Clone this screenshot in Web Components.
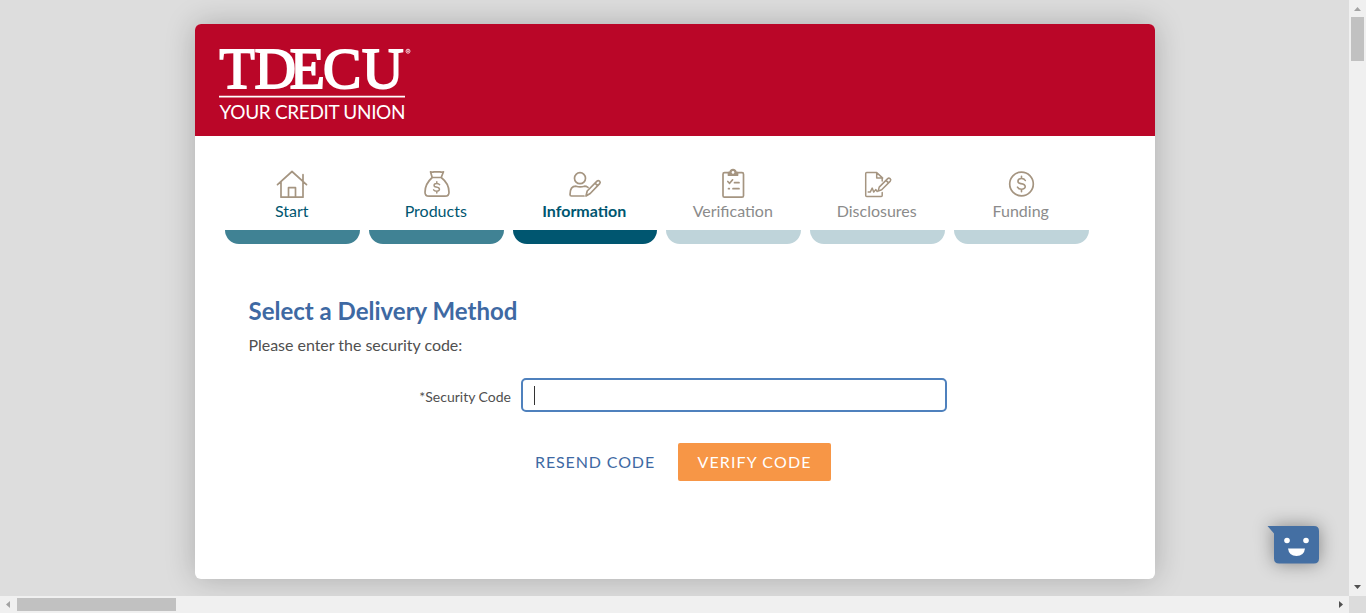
<!DOCTYPE html>
<html lang="en">
<head>
<meta charset="utf-8">
<title>TDECU</title>
<style>
html,body{margin:0;height:100%;overflow:hidden}
body{font-family:Lato,sans-serif;background:#ddd}
</style>
</head>
<body>
<app-window>
  <app-card>
    <brand-header slot="header"></brand-header>
    <step-bar>
      <step-item state="done" icon="home">Start</step-item>
      <step-item state="done" icon="bag">Products</step-item>
      <step-item state="active" icon="person">Information</step-item>
      <step-item icon="clipboard">Verification</step-item>
      <step-item icon="document">Disclosures</step-item>
      <step-item icon="coin">Funding</step-item>
    </step-bar>
    <code-form></code-form>
  </app-card>
  <chat-button slot="chat"></chat-button>
</app-window>
<script>
function define(name, html) {
  customElements.define(name, class extends HTMLElement {
    constructor() {
      super();
      const t = document.createElement('template');
      t.innerHTML = html;
      this.attachShadow({mode: 'open'}).append(t.content.cloneNode(true));
    }
  });
}

define('app-window', `<style>
:host{display:grid;grid-template:596px 17px / 1349px 17px;width:1366px;height:613px;position:relative}
.view{background:#ddd;overflow:hidden;padding:24px 0 0 195px}
.v,.h{background:#f0f0f0;display:flex;align-items:center}
.v{flex-direction:column}
.v svg,.h svg{flex:none;display:block}
.v i{width:13px;height:44px;background:#c1c1c1}
.h i{width:159px;height:13px;background:#c1c1c1}
.sp{flex:1}
.corner{background:#dcdcdc}
slot[name=chat]{display:block;position:absolute;left:1267px;top:525px}
</style>
<div class="view"><slot></slot></div>
<div class="v"><svg width="17" height="17"><path d="M5 11h7L8.500 7z" fill="#a3a3a3"/></svg><i></i><span class="sp"></span><svg width="17" height="17"><path d="M5 6h7L8.500 10z" fill="#505050"/></svg></div>
<div class="h"><svg width="17" height="17"><path d="M10 5v7L6 8.500z" fill="#a3a3a3"/></svg><i></i><span class="sp"></span><svg width="17" height="17"><path d="M7 5v7l4-3.500z" fill="#505050"/></svg></div>
<div class="corner"></div>
<slot name="chat"></slot>`);

define('app-card', `<style>
:host{display:block;width:960px;height:555px;background:#fff;border-radius:6px;overflow:hidden;box-shadow:0 0 30px rgba(0,0,0,.22)}
</style><slot name="header"></slot><slot></slot>`);

define('brand-header', `<style>
:host{display:block;height:112px;background:#ba0628}
svg{display:block}
</style>
<svg width="240" height="112" viewBox="195 24 240 112" fill="#fff">
<text y="87.800" x="219.500 254.500 289.800 323 362" font-family="Liberation Serif" font-size="57.500" stroke="#fff" stroke-width="1.900">TDECU</text>
<circle cx="408" cy="51.200" r="2" fill="none" stroke="#f4d0d7" stroke-width="1"/><circle cx="408" cy="51.200" r=".9" fill="#f4d0d7"/>
<path d="M219 95.700h186v1.700H219z"/>
<text x="219.500" y="118.800" font-family="Lato" font-size="19" textLength="186">YOUR CREDIT UNION</text>
</svg>`);

define('step-bar', `<style>
:host{display:flex;gap:9px;padding:32px 0 0 30px}
</style><slot></slot>`);

const icons = {
  home: '<path d="M2.500 17.500L17 4.300l14.500 13.200M6 15v15h22V15M28 14V7.500M13.500 30V20.500h7V30"/>',
  bag: '<path d="M13.200 10.300L11.500 4.600q2 .8 3.500 0h6q1.500.8 3.500 0L22.200 10.300zM13.200 10.300C9 14 6 19.500 6 25q0 4 4 4h16q4 0 4-4C30 19.500 27 14 22.200 10.300"/><path stroke-width="1.500" d="M20.600 17.500q-.8-1.300-2.800-1.300c-3.400 0-3.600 3.300-.6 3.700 4.500.6 4 4.100.6 4.100q-2.300 0-3.200-1.400M17.800 14.500v1.700M17.800 24v1.800"/>',
  person: '<circle cx="12" cy="11" r="5.500"/><path d="M16 28.800H3.500Q2 28.800 2 27.300C2 21.500 4 19 8 19q4 1.300 8.500 0 1.800 0 3.500 1.200M18 28.800l1.200-5L29 14q1.200-1.100 2.500 0 1.300 1.300.2 2.500l-9.500 9.800zM27 16l2.500 2.500"/>',
  clipboard: '<rect x="7" y="5.500" width="20.500" height="24.500" rx="1.500"/><path fill="#a59581" d="M12.500 8V5.500H14Q14.500 2.500 17 2.500t3 3h1.500V8z"/><circle cx="17" cy="5.200" r="1.300" fill="#fff" stroke="none"/><path d="M11.800 14.300l1.800 1.800 3-3.500M18.500 15.500h4.500M12.500 21.500h.8M17 21.500h6"/>',
  document: '<path transform="translate(.7 .4)" d="M21.500 25v3q0 1-1 1H6q-1 0-1-1V6q0-1 1-1h10l5.500 5v3.500M16 5v5.500h6M7.500 24.500h2l2-4 1.500 4 2-2.500 1.500 1.800M17.500 23.500l1-4L27 11q1.100-1 2.400 0 1.300 1.300.2 2.500L21 22.200zM25.300 12.800l2.500 2.500" stroke-width="1.500"/>',
  coin: '<g transform="translate(.5 .3)"><circle cx="17" cy="16.500" r="11.800"/><path d="M20.800 13q-1-2-3.800-2c-4.400 0-4.800 4.500-.7 5.100 6.100.8 5.500 5.600.7 5.600q-3 0-4-2.100M17 8.800V11M17 21.700V24.200" stroke-width="1.600"/></g>'
};
customElements.define('step-item', class extends HTMLElement {
  connectedCallback() {
    this.attachShadow({mode: 'open'}).innerHTML = `<style>
:host{display:flex;flex-direction:column;align-items:center;width:135px;color:#8b8b8b;--bar:#bfd4da;font-size:16px}
:host([state=done]){color:#005670;--bar:#408294}
:host([state=active]){width:144px;color:#005670;--bar:#005670;font-weight:700}
svg{display:block;flex:none;fill:none;stroke:#a59581;stroke-width:1.700;stroke-linecap:round;stroke-linejoin:round;margin-right:1px}
.label{line-height:20px;height:29px;padding-right:1.500px;white-space:nowrap}
.bar{align-self:stretch;height:14px;background:var(--bar);border-radius:0 0 15px 15px}
</style><svg width="34" height="33" viewBox="0 .8 34 33">${icons[this.getAttribute('icon')]}</svg><span class="label"><slot></slot></span><div class="bar"></div>`;
  }
});

define('code-form', `<style>
:host{display:block;padding:50px 0 0 53.500px;color:#505050}
h1{margin:0;font-size:24px;line-height:34px;font-weight:700;color:#3e69a3}
p{margin:7px 0 0;font-size:16px;line-height:20px;letter-spacing:-.03px}
.row{display:grid;grid-template-columns:262.500px 426px;column-gap:10px;align-items:center;margin-top:23px}
label{text-align:right;font-size:14px;padding-top:3px}
.input{box-sizing:border-box;height:34px;border:2px solid #4f81bd;border-radius:5px;display:flex;align-items:center;padding-left:11px}
.caret{width:1px;height:19px;background:#333}
.actions{display:flex;align-items:center;margin:31px 0 0 286.500px;gap:23px}
a{font-size:16px;letter-spacing:.88px;color:#3e69a3;width:120px;white-space:nowrap;padding-bottom:2px}
button{box-sizing:border-box;width:153px;height:38px;border:0;border-radius:2px;padding:0 0 2px;background:#f79646;color:#fff;font:16px Lato,sans-serif;letter-spacing:1.120px}
</style>
<h1>Select a Delivery Method</h1>
<p>Please enter the security code:</p>
<div class="row"><label>*Security Code</label><div class="input"><span class="caret"></span></div></div>
<div class="actions"><a>RESEND CODE</a><button>VERIFY CODE</button></div>`);

define('chat-button', `<style>
:host{display:block;width:54px;height:40px}
svg{display:block;overflow:visible;filter:drop-shadow(0 0 9px rgba(0,0,0,.4))}
</style>
<svg width="54" height="40"><path d="M.5 1H47q5 0 5 5v27.500q0 5-5 5H12q-5 0-5-5V8.500z" fill="#446fa3"/><circle cx="20" cy="15.500" r="2.800" fill="#fff"/><circle cx="39" cy="15.500" r="2.800" fill="#fff"/><path d="M21 23.500h17q-1 7.500-8.500 7.500T21 23.500z" fill="#fff"/></svg>`);
</script>
</body>
</html>
